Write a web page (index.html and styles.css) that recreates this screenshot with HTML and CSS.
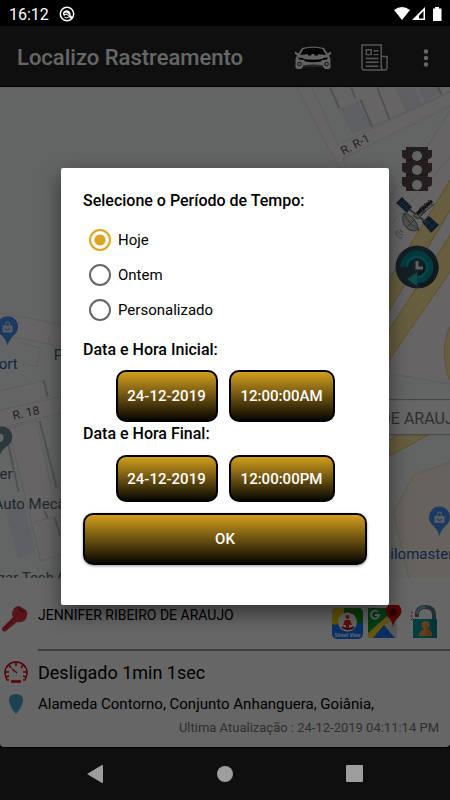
FILE: index.html
```html
<!DOCTYPE html>
<html lang="pt-BR">
<head>
    <meta charset="UTF-8">
    <meta name="viewport" content="width=device-width, initial-scale=1.0">
    <title>Localizo Rastreamento</title>
    <link rel="stylesheet" href="styles.css">
</head>
<body>
    <div class="status-bar">
        <span class="clock">16:12</span>
        <svg class="status-app" width="16" height="16" viewBox="0 0 16 16">
            <circle cx="8" cy="8" r="6.7" fill="none" stroke="#fff" stroke-width="1.5"/>
            <path d="M4 6.500Q6 3.500 9 4.500Q12 6 11.500 9L14 12 12.500 13.500 8 9Q6 8 5.500 10Q3.500 9 4 6.500z" fill="#fff"/>
            <path d="M5.500 7.500Q8 5.500 10 9.500" fill="none" stroke="#000" stroke-width="1"/>
            <path d="M5.500 11Q7.500 12.500 9.500 11.500" fill="none" stroke="#fff"/>
        </svg>
        <svg class="status-icons" width="50" height="16" viewBox="0 0 50 16">
            <path d="M1 4Q9 -2 17 4L9 14z" fill="#fff"/>
            <path d="M32 1v13H19z" fill="#fff"/>
            <path d="M30.500 5v7.500H26V9.500z" fill="#000"/>
            <path d="M40 2.500h2V1h4v1.500h2.500V15H40z" fill="#fff"/>
        </svg>
    </div>

    <div class="app">
        <header class="app-bar">
            <h1>Localizo Rastreamento</h1>
            <button type="button" class="bar-button" aria-label="Veículos">
                <svg width="36" height="24" viewBox="0 0 36 24">
                    <path d="M7 2Q18 -1 29 2L32.500 7.500L36 5.500V8L34 9.500L35.500 13V22Q35 23 33 23H30L28 21H8L6 23H3Q1 23 .5 22V13L2 9.500L0 8V5.500L3.500 7.500z" fill="#f4f4f4"/>
                    <path d="M8.500 3Q18 .5 27.500 3L31 9Q18 7 5 9z" fill="#000"/>
                    <path d="M13 7.500h3.500v2H13zM19.500 7.500H23v2h-3.500z" fill="#000"/>
                    <path d="M3 11.500l5 .5 1 2-5-.5zM33 11.500l-5 .5-1 2 5-.5zM8.500 13Q18 14.500 27.500 13L26 15.500Q18 17 10 15.500z" fill="#000"/>
                    <path d="M8 19.500Q18 17.500 28 19.500V21H8z" fill="#555"/>
                    <circle cx="4.500" cy="18" r="1.800" fill="none" stroke="#262626"/>
                    <circle cx="31.500" cy="18" r="1.800" fill="none" stroke="#262626"/>
                </svg>
            </button>
            <button type="button" class="bar-button" aria-label="Relatórios">
                <svg width="27" height="27" viewBox="0 0 28 28" fill="none" stroke="#d8d8d8" stroke-width="1.500">
                    <path d="M21 23V1H1V24Q1 27 4 27H24Q27 27 27 24V13H21V24Q21 27 24 27"/>
                    <path d="M5.500 6h5v5h-5zM13 7h5M13 11h5M5 15h13M5 19h13M5 23h13"/>
                </svg>
            </button>
            <button type="button" class="bar-button" aria-label="Mais opções">
                <svg width="16" height="18" viewBox="0 0 16 18" fill="#fff">
                    <circle cx="8" cy="2.500" r="2.200"/>
                    <circle cx="8" cy="9" r="2.200"/>
                    <circle cx="8" cy="15.500" r="2.200"/>
                </svg>
            </button>
        </header>

        <main class="map">
            <svg class="map-tiles" viewBox="0 87 450 490" preserveAspectRatio="xMidYMid slice">
                <rect y="87" width="450" height="490" fill="#f6fdf9"/>

                <!-- streets -->
                <g fill="#fffafa" stroke="#e6e6e6">
                    <path d="M296 86L311 86 338 145 452 91V105L343 158 350 187 335 160z"/>
                    <path d="M330 86L339 107 370 127 405 112 452 90V86z"/>
                    <path d="M452 178V107L428 145 390 196V277z"/>
                    <path d="M452 207V233L390 328V308z"/>
                    <path d="M452 268V384L390 373V350z"/>
                    <path d="M-2 312L62 324V346L-2 333z"/>
                    <path d="M-2 410L62 396V412L-2 428z"/>
                    <path d="M-2 391L44 380 49 396"/>
                    <path d="M9 428L41 560 62 553V490L50 480 37 420z"/>
                </g>
                <path d="M452 154L390 225" stroke="#e6e6e6"/>
                <g fill="#eaedf5">
                    <path d="M340 109L358 101 370 127 352 134z"/>
                    <path d="M395 88H415L421 104 405 112z"/>
                    <path d="M418 88H437L439 93 424 102z"/>
                    <path d="M5 505L18 557 36 551 23 500z"/>
                </g>
                <g fill="none" stroke="#c8c8c8" stroke-width="2">
                    <path d="M330 88L339 108M351 88L355 98M360 99L372 127M377 88L389 119M437 86L441 94"/>
                    <path d="M44 380L48 396M40 420L57 487M8 440L19 491M45 510L48 518M55 517L61 535"/>
                </g>
                <g fill="none" stroke="#e6e6e6">
                    <path d="M32 522L62 514M32 522L41 560"/>
                    <path d="M22 342L41 348 37 366 20 362" stroke="#f3e3dc"/>
                </g>

                <!-- avenues -->
                <g fill="#ffec9f" stroke="#efc96b">
                    <path d="M452 176V206L390 308V277z"/>
                    <path d="M452 231V268L402 340 388 361V331z"/>
                    <path d="M452 321Q436 350 452 386z"/>
                    <path d="M388 440L398 434H428L388 456z"/>
                </g>
                <path d="M452 461L413 474 393 512 409 579H452z" fill="#fff5ea" stroke="#f6dcb5"/>

                <text class="street" transform="translate(343 155) rotate(-27)">R. R-1</text>
                <text class="street" transform="translate(14 419) rotate(-12)">R. 18</text>
                <text class="place shop" x="-9" y="368">Fort</text>
                <text class="place" x="54" y="359">P</text>
                <text class="place" x="-5" y="478">fer</text>
                <text class="place" x="-6" y="508">Auto Mecânica</text>
                <text class="place" x="-3" y="582">gar Tech Car</text>
                <text class="place shop" x="390" y="558">ilomaster</text>

                <!-- pins -->
                <g id="shop-pin">
                    <path d="M8 345Q6 338 1 334A10.500 10.500 0 1 1 15 334Q10 338 8 345z" fill="#478ff5"/>
                    <path d="M3 325h10v7H3z" fill="#d8e6ff"/>
                    <path d="M5.500 328Q8 331 10.500 328" fill="none" stroke="#478ff5"/>
                    <path d="M6 325v-1.500a2 2 0 0 1 4 0V325" fill="none" stroke="#d8e6ff"/>
                </g>
                <use href="#shop-pin" x="431" y="190"/>
                <path d="M0 455Q-1 448 -6 443A10.500 10.500 0 1 1 8 445Q2 449 0 455z" fill="#6d8d97"/>
                <circle cx="0" cy="437" r="4" fill="#fff"/>

                <!-- vehicle label -->
                <rect x="300" y="399" width="160" height="35" fill="#fff" stroke="#aaa"/>
                <text class="vehicle" x="380" y="423">DE ARAUJO</text>
            </svg>

            <div class="map-tools">
                <button type="button" aria-label="Trânsito">
                    <svg width="32" height="44" viewBox="0 0 32 44">
                        <path d="M5 0H27V3H31V8Q31 12 27 12V16H31V22Q31 26 27 26V30H31V36Q31 40 27 40V44H5V40Q1 40 1 36V30H5V26Q1 26 1 22V16H5V12Q1 12 1 8V3H5z" fill="#5b4c4f"/>
                        <path d="M5 13h22M5 28h22" stroke="#3a3033"/>
                        <g fill="#f2faf6"><circle cx="16" cy="9" r="5"/><circle cx="16" cy="23" r="5"/><circle cx="16" cy="38" r="5"/></g>
                    </svg>
                </button>
                <button type="button" aria-label="Satélite">
                    <svg width="44" height="44" viewBox="0 0 44 44">
                        <path d="M7 1L17 11 12 17 1 7z" fill="#24486e"/>
                        <path d="M27 26L34 20 44 29 36 37z" fill="#24486e"/>
                        <path d="M4 4l10 11M10 4l-6 6M14 8l-6 6M30 23l10 10M38 23l-8 7M41 26l-8 8" stroke="#6a87a0" stroke-width=".6"/>
                        <path d="M14 13L32 27" stroke="#777" stroke-width="2"/>
                        <path d="M18 20L27 11 31 15 23 23z" fill="#b5b5b0" stroke="#777"/>
                        <path d="M22 18L37 5" stroke="#333" stroke-width="3"/>
                        <path d="M24 13L36 4M27 18L39 8M33 4l5 6M29 7l5 6M25 11l5 6" stroke="#666" stroke-width="1"/>
                        <path d="M9 17Q20 19 24 34 15 37 10 30 6 24 9 17z" fill="#c7c7bf" stroke="#777"/>
                        <path d="M9 17Q13 28 24 34M20 23L12 31" fill="none" stroke="#777"/>
                        <path d="M5 33Q5 36 8 36M3 34Q3 39 8 39M1 35Q1 42 7 42" fill="none" stroke="#aaa"/>
                    </svg>
                </button>
                <button type="button" aria-label="Histórico">
                    <svg width="44" height="44" viewBox="0 0 44 44">
                        <circle cx="22" cy="22" r="21.500" fill="#334d5c"/>
                        <path d="M34 9L43 18A21 21 0 0 1 27 43L20 36z" fill="#263c48"/>
                        <path d="M8.500 22A13.500 13.500 0 1 1 22 35.500" fill="none" stroke="#00929c" stroke-width="6"/>
                        <path d="M12 22A10 10 0 1 1 22 32" fill="none" stroke="#00b8c4" stroke-width="2"/>
                        <path d="M22 27V41L12 34z" fill="#32b5b8"/>
                        <path d="M22 16V23H28" fill="none" stroke="#eee" stroke-width="3"/>
                    </svg>
                </button>
            </div>
        </main>

        <section class="vehicle-card">
            <div class="vehicle-row owner">
                <svg class="key" width="27" height="27" viewBox="0 0 27 27">
                    <path d="M12 5Q14 1 18 1L25 5Q28 10 24 15 21 18 16 17L5 26Q1 28 1 23L12 12Q10 9 12 5z" fill="#d93642"/>
                    <path d="M18 4l5 3" stroke="#7d222a" stroke-width="2"/>
                    <path d="M14 13L4 23" stroke="#9c222d"/>
                </svg>
                <h2>JENNIFER RIBEIRO DE ARAUJO</h2>
                <div class="shortcuts">
                    <button type="button" aria-label="Street View">
                        <svg width="31" height="34" viewBox="0 0 31 34">
                            <rect y="3" width="31" height="31" rx="5" fill="#137bff"/>
                            <path d="M0 19V8Q0 3 5 3H12V12L4 20z" fill="#ffd400"/>
                            <path d="M13 3H26Q31 3 31 8V15L26 20 13 12z" fill="#0b9c1c"/>
                            <circle cx="15.500" cy="17" r="9.500" fill="#fff"/>
                            <circle cx="15.500" cy="12" r="2" fill="#e22"/>
                            <path d="M13 15h5l2 5h-3v3h-3v-3h-3z" fill="#e22"/>
                            <path d="M10 22q6 4 12 0" fill="none" stroke="#a11" stroke-width="2"/>
                            <circle cx="20" cy="7" r="2" fill="#f22"/>
                            <text x="15.500" y="32" class="street-view">Street View</text>
                        </svg>
                    </button>
                    <button type="button" aria-label="Google Maps">
                        <svg width="34" height="34" viewBox="0 0 34 34">
                            <path d="M0 3H29V33H0z" fill="#dcdcdc"/>
                            <path d="M0 3H22L17 16 0 31z" fill="#119c30"/>
                            <path d="M0 28L18 12 22 16 5 33H0z" fill="#ffd52c"/>
                            <path d="M5 33L16 20 27 33z" fill="#2277ee"/>
                            <path d="M10 7A4 4 0 1 0 11 10H7" fill="none" stroke="#fff" stroke-width="1.800"/>
                            <path d="M25 23Q25 17 20 12A8 8 0 1 1 31 12Q25 17 25 23z" fill="#d90c0c"/>
                            <circle cx="25" cy="7.500" r="4" fill="#720606"/>
                        </svg>
                    </button>
                    <button type="button" aria-label="Bloquear">
                        <svg width="28" height="34" viewBox="0 0 28 34">
                            <path d="M7 12V9Q7 2 15.500 2T24 10V15" fill="none" stroke="#567780" stroke-width="4"/>
                            <path d="M7 9Q7 2 15.500 2" fill="none" stroke="#9bb2b8" stroke-width="2"/>
                            <path d="M3 14H27V33H3z" fill="#009b9e"/>
                            <path d="M19 14H27V33H22z" fill="#08818b"/>
                            <circle cx="15.500" cy="20" r="4" fill="#ff9c49"/>
                            <path d="M13 22h5v3q4 0 4 6H9q0-6 4-6z" fill="#ff9c49"/>
                            <path d="M16 16v15h6q0-6-4-7z" fill="#e78434"/>
                            <path d="M3 8L1 7M2.500 11H0M3 13L1 15" stroke="#ef3844"/>
                        </svg>
                    </button>
                </div>
            </div>
            <div class="vehicle-row">
                <svg width="24" height="22" viewBox="0 0 24 22" fill="none" stroke="#e00000" stroke-width="1.500">
                    <path d="M5 19H3Q1 15 1 11.500A11 10.500 0 0 1 23 11.500Q23 15 21 19H19"/>
                    <path d="M12 1v4M5 4l2 3M19 4l-2 3M1 11h4M23 11h-4M8 8l5 4M2 16l3-1M22 16l-3-1"/>
                    <path d="M7 20.500h10" stroke-width="2.500"/>
                </svg>
                <p class="state">Desligado 1min 1sec</p>
            </div>
            <div class="vehicle-row">
                <svg width="24" height="20" viewBox="0 0 24 20">
                    <path d="M12 20Q5 12 5 6Q5 0 12 0T19 6Q19 12 12 20z" fill="#49a9d0"/>
                </svg>
                <p class="address">Alameda Contorno, Conjunto Anhanguera, Goiânia,</p>
            </div>
            <p class="updated">Ultima Atualização : 24-12-2019 04:11:14 PM</p>
        </section>

        <div class="scrim">
            <form class="dialog" role="dialog" aria-label="Selecione o Período de Tempo">
                <h3>Selecione o Período de Tempo:</h3>
                <div class="periods">
                    <label><input type="radio" name="period" value="today" checked>Hoje</label>
                    <label><input type="radio" name="period" value="yesterday">Ontem</label>
                    <label><input type="radio" name="period" value="custom">Personalizado</label>
                </div>
                <h3>Data e Hora Inicial:</h3>
                <div class="date-row start">
                    <button type="button" class="gold date">24-12-2019</button>
                    <button type="button" class="gold time">12:00:00AM</button>
                </div>
                <h3>Data e Hora Final:</h3>
                <div class="date-row end">
                    <button type="button" class="gold date">24-12-2019</button>
                    <button type="button" class="gold time">12:00:00PM</button>
                </div>
                <button type="submit" class="gold ok">OK</button>
            </form>
        </div>
    </div>

    <nav class="nav-bar">
        <button type="button" aria-label="Voltar">
            <svg width="18" height="20" viewBox="0 0 18 20"><path d="M16 1Q17 1 17 2V18Q17 19 16 19L1 10z" fill="#9e9e9e"/></svg>
        </button>
        <button type="button" aria-label="Início">
            <svg width="18" height="18" viewBox="0 0 18 18"><circle cx="9" cy="9" r="8" fill="#9e9e9e"/></svg>
        </button>
        <button type="button" aria-label="Recentes">
            <svg width="18" height="18" viewBox="0 0 18 18"><rect width="17" height="17" rx="1" fill="#9e9e9e"/></svg>
        </button>
    </nav>
</body>
</html>
```
FILE: styles.css
```css
* {
    box-sizing: border-box;
}

body {
    margin: 0;
    min-height: 100vh;
    display: flex;
    flex-direction: column;
    background: #000;
    color: #000;
    font-family: Roboto, sans-serif;
}

h1, h2, h3, p {
    margin: 0;
    font-weight: 400;
}

button {
    padding: 0;
    border: none;
    background: none;
    font-family: inherit;
    cursor: pointer;
}

svg {
    display: block;
}

/* Status bar */
.status-bar {
    display: flex;
    align-items: center;
    height: 26px;
    padding: 2px 7px 0 9px;
    color: #fff;
}

.clock {
    font-size: 16px;
}

.status-app {
    margin-left: 10px;
}

.status-icons {
    margin-left: auto;
}

/* App */
.app {
    position: relative;
    flex: 1;
    display: flex;
    flex-direction: column;
}

.app-bar {
    display: flex;
    align-items: center;
    gap: 30px;
    height: 61px;
    padding: 3px 16px 0 17px;
    background: #262626;
    color: #fff;
    border-bottom: 1px solid #000;
}

.app-bar h1 {
    flex: 1;
    font-size: 22px;
    font-weight: 500;
    white-space: nowrap;
}

/* Map */
.map {
    position: relative;
    flex: 1;
    min-height: 300px;
    overflow: hidden;
}

.map-tiles {
    position: absolute;
    width: 100%;
    height: 100%;
}

.map-tiles text {
    font-family: Roboto, sans-serif;
}

.street {
    font-size: 12px;
    fill: #555;
}

.place {
    font-size: 15px;
    fill: #4c6570;
}

.shop {
    fill: #2a62b5;
}

.vehicle {
    font-size: 16px;
    fill: #777;
}

.map-tools {
    position: absolute;
    top: 60px;
    right: 11px;
    display: flex;
    flex-direction: column;
    align-items: center;
    gap: 5px;
}

/* Vehicle details */
.vehicle-card {
    padding: 27px 0 11px;
    background: #fff;
    border-radius: 0 0 4px 4px;
}

.vehicle-row {
    display: grid;
    grid-template-columns: 38px 1fr auto;
    align-items: center;
    height: 32px;
}

.vehicle-row > svg {
    margin-left: 4px;
}

.vehicle-row.owner {
    align-items: start;
    height: 46px;
    margin-bottom: 5px;
    background: linear-gradient(#999, #999) 38px 100% / 100% 2px no-repeat;
}

.vehicle-row > .key {
    margin-left: 1px;
}

.owner h2 {
    font-size: 14px;
    line-height: 20px;
}

.shortcuts {
    display: flex;
    gap: 5px;
    padding-right: 12px;
}

.shortcuts button:last-child {
    margin-left: 3px;
}

.street-view {
    font-family: Roboto, sans-serif;
    font-size: 5px;
    font-weight: 700;
    text-anchor: middle;
    fill: #fff;
}

.state {
    font-size: 18px;
}

.address {
    font-size: 15px;
}

.updated {
    padding-right: 11px;
    color: #777;
    font-size: 13px;
    line-height: 16px;
    text-align: right;
}

/* Period dialog */
.scrim {
    position: absolute;
    inset: 0;
    display: flex;
    align-items: center;
    padding: 0 61px;
    background: rgba(0, 0, 0, 0.6);
}

.dialog {
    flex: 1;
    padding: 22px 22px 40px;
    background: #fff;
    border-radius: 2px;
    box-shadow: 0 8px 20px rgba(0, 0, 0, 0.5);
}

.dialog h3 {
    font-size: 16px;
    font-weight: 500;
    line-height: 22px;
}

.periods {
    display: flex;
    flex-direction: column;
    margin: 10px 0 12px;
}

.periods label {
    display: flex;
    align-items: center;
    gap: 7px;
    height: 35px;
    padding-left: 6px;
    font-size: 15px;
}

.periods input {
    appearance: none;
    width: 22px;
    height: 22px;
    margin: 0;
    border: 2px solid #666;
    border-radius: 50%;
}

.periods input:checked {
    border-color: #daa520;
    background: radial-gradient(circle, #daa520 5px, transparent 6px);
}

.date-row {
    display: flex;
    justify-content: center;
    gap: 11px;
}

.start {
    margin: 9px 0 1px;
}

.end {
    margin: 10px 0 11px;
}

.gold {
    height: 52px;
    border: 2px solid #000;
    border-radius: 10px;
    background: linear-gradient(#daa520, #000);
    background-origin: border-box;
    color: #fff;
    font-size: 15px;
    font-weight: 500;
}

.end .gold {
    height: 47px;
}

.date {
    width: 102px;
}

.time {
    width: 106px;
}

.ok {
    display: block;
    width: 100%;
    box-shadow: 0 1px 3px rgba(0, 0, 0, 0.4);
}

/* Navigation bar */
.nav-bar {
    display: flex;
    justify-content: space-around;
    align-items: center;
    height: 53px;
    padding: 0 30px;
    background: #0f0f0f;
    border-top: 1px solid #000;
}
```
